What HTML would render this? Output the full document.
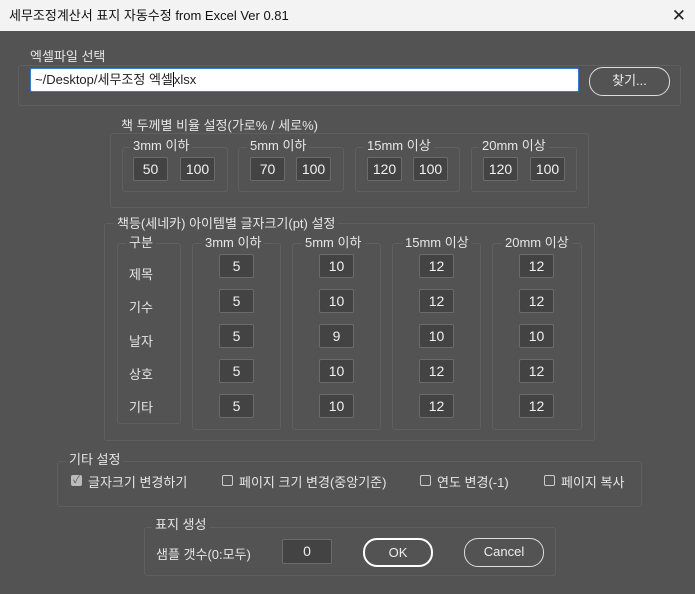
<!DOCTYPE html>
<html><head><meta charset="utf-8"><style>
*{margin:0;padding:0;box-sizing:border-box}
body{width:695px;height:594px;background:#535353;font-family:"Liberation Sans","Noto Sans CJK KR",sans-serif;color:#e6e6e6;font-size:13px;position:relative;overflow:hidden}
.a{position:absolute}
.title{left:0;top:0;width:695px;height:31px;background:#f3f3f3;color:#111;font-size:13px;line-height:31px;padding-left:9px}
.x{right:9px;top:0;font-size:17px;line-height:31px;color:#222;font-weight:300}
.g{position:absolute;border:1px solid #5f5f5f;border-radius:3px}
.l{position:absolute;background:#535353;padding:0 3px;line-height:14px;white-space:nowrap}
.i{position:absolute;width:35px;height:24px;background:#434343;border:1px solid #6b6b6b;border-radius:2px;text-align:center;line-height:22px;color:#f0f0f0;font-size:14px}
.b{position:absolute;border:1.5px solid #ddd;border-radius:14px;text-align:center;color:#eee;font-size:13px}
.cb{position:absolute;width:11px;height:11px;border:1px solid #ccc;border-radius:2px}
</style></head><body>
<div class="a title">세무조정계산서 표지 자동수정 from Excel Ver 0.81</div>
<div class="a x">✕</div>

<div class="g" style="left:18px;top:65px;width:663px;height:41px"></div>
<div class="l" style="left:27px;top:50px">엑셀파일 선택</div>
<div class="a" style="left:30px;top:68px;width:549px;height:24px;background:#fff;border:1px solid #3a7bd5;border-radius:2px;color:#222;line-height:22px;padding-left:4px;font-size:13px">~/Desktop/세무조정 엑셀<span style="border-left:1px solid #000"></span>xlsx</div>
<div class="b" style="left:589px;top:67px;width:81px;height:29px;line-height:26px">찾기...</div>

<div class="g" style="left:110px;top:133px;width:479px;height:75px"></div>
<div class="l" style="left:118px;top:119px">책 두께별 비율 설정(가로% / 세로%)</div>
<div class="g" style="left:122px;top:147px;width:106px;height:45px"></div><div class="l" style="left:130px;top:139px">3mm 이하</div>
<div class="i" style="left:133px;top:157px">50</div><div class="i" style="left:180px;top:157px">100</div>
<div class="g" style="left:238px;top:147px;width:106px;height:45px"></div><div class="l" style="left:247px;top:139px">5mm 이하</div>
<div class="i" style="left:250px;top:157px">70</div><div class="i" style="left:296px;top:157px">100</div>
<div class="g" style="left:355px;top:147px;width:105px;height:45px"></div><div class="l" style="left:364px;top:139px">15mm 이상</div>
<div class="i" style="left:367px;top:157px">120</div><div class="i" style="left:413px;top:157px">100</div>
<div class="g" style="left:471px;top:147px;width:106px;height:45px"></div><div class="l" style="left:479px;top:139px">20mm 이상</div>
<div class="i" style="left:483px;top:157px">120</div><div class="i" style="left:530px;top:157px">100</div>

<div class="g" style="left:104px;top:223px;width:491px;height:218px"></div>
<div class="l" style="left:114px;top:217px">책등(세네카) 아이템별 글자크기(pt) 설정</div>
<div class="g" style="left:117px;top:243px;width:64px;height:181px"></div><div class="l" style="left:126px;top:236px">구분</div>
<div class="g" style="left:192px;top:243px;width:89px;height:187px"></div><div class="l" style="left:202px;top:236px">3mm 이하</div>
<div class="g" style="left:292px;top:243px;width:89px;height:187px"></div><div class="l" style="left:302px;top:236px">5mm 이하</div>
<div class="g" style="left:392px;top:243px;width:89px;height:187px"></div><div class="l" style="left:402px;top:236px">15mm 이상</div>
<div class="g" style="left:492px;top:243px;width:90px;height:187px"></div><div class="l" style="left:502px;top:236px">20mm 이상</div>
<div class="a" style="left:129px;top:264px">제목</div>
<div class="a" style="left:129px;top:297px">기수</div>
<div class="a" style="left:129px;top:331px">날자</div>
<div class="a" style="left:129px;top:364px">상호</div>
<div class="a" style="left:129px;top:397px">기타</div>
<div class="i" style="left:219px;top:254px">5</div><div class="i" style="left:319px;top:254px">10</div><div class="i" style="left:419px;top:254px">12</div><div class="i" style="left:519px;top:254px">12</div>
<div class="i" style="left:219px;top:289px">5</div><div class="i" style="left:319px;top:289px">10</div><div class="i" style="left:419px;top:289px">12</div><div class="i" style="left:519px;top:289px">12</div>
<div class="i" style="left:219px;top:324px">5</div><div class="i" style="left:319px;top:324px">9</div><div class="i" style="left:419px;top:324px">10</div><div class="i" style="left:519px;top:324px">10</div>
<div class="i" style="left:219px;top:359px">5</div><div class="i" style="left:319px;top:359px">10</div><div class="i" style="left:419px;top:359px">12</div><div class="i" style="left:519px;top:359px">12</div>
<div class="i" style="left:219px;top:394px">5</div><div class="i" style="left:319px;top:394px">10</div><div class="i" style="left:419px;top:394px">12</div><div class="i" style="left:519px;top:394px">12</div>

<div class="g" style="left:57px;top:461px;width:585px;height:46px"></div>
<div class="l" style="left:66px;top:453px">기타 설정</div>
<div class="cb" style="left:71px;top:475px;background:#bbb;border-color:#bbb;color:#555;font-size:10px;line-height:9px;text-align:center">✓</div>
<div class="a" style="left:88px;top:472px">글자크기 변경하기</div>
<div class="cb" style="left:222px;top:475px"></div><div class="a" style="left:239px;top:472px">페이지 크기 변경(중앙기준)</div>
<div class="cb" style="left:420px;top:475px"></div><div class="a" style="left:437px;top:472px">연도 변경(-1)</div>
<div class="cb" style="left:544px;top:475px"></div><div class="a" style="left:561px;top:472px">페이지 복사</div>

<div class="g" style="left:144px;top:527px;width:412px;height:49px"></div>
<div class="l" style="left:152px;top:518px">표지 생성</div>
<div class="a" style="left:156px;top:544px">샘플 갯수(0:모두)</div>
<div class="i" style="left:282px;top:539px;width:50px;height:25px">0</div>
<div class="b" style="left:363px;top:538px;width:70px;height:29px;line-height:26px;border-width:2px;border-color:#fff">OK</div>
<div class="b" style="left:464px;top:538px;width:80px;height:29px;line-height:26px">Cancel</div>
</body></html>
